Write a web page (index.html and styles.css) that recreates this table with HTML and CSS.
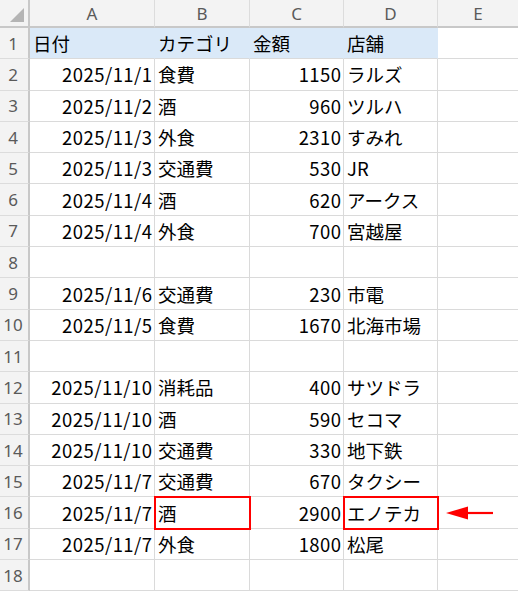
FILE: index.html
```html
<!DOCTYPE html>
<html lang="ja">
<head>
<meta charset="utf-8">
<link rel="stylesheet" href="styles.css">
</head>
<body>
<div class="sheet">
  <div class="corner"><span class="tri"></span></div>
  <div class="ch">A</div><div class="ch">B</div><div class="ch">C</div><div class="ch">D</div><div class="ch last">E</div>

  <div class="rh">1</div><div class="c hd">日付</div><div class="c hd">カテゴリ</div><div class="c hd">金額</div><div class="c hd">店舗</div><div class="c last"></div>
  <div class="rh">2</div><div class="c n">2025/11/1</div><div class="c">食費</div><div class="c n">1150</div><div class="c">ラルズ</div><div class="c last"></div>
  <div class="rh">3</div><div class="c n">2025/11/2</div><div class="c">酒</div><div class="c n">960</div><div class="c">ツルハ</div><div class="c last"></div>
  <div class="rh">4</div><div class="c n">2025/11/3</div><div class="c">外食</div><div class="c n">2310</div><div class="c">すみれ</div><div class="c last"></div>
  <div class="rh">5</div><div class="c n">2025/11/3</div><div class="c">交通費</div><div class="c n">530</div><div class="c">JR</div><div class="c last"></div>
  <div class="rh">6</div><div class="c n">2025/11/4</div><div class="c">酒</div><div class="c n">620</div><div class="c">アークス</div><div class="c last"></div>
  <div class="rh">7</div><div class="c n">2025/11/4</div><div class="c">外食</div><div class="c n">700</div><div class="c">宮越屋</div><div class="c last"></div>
  <div class="rh">8</div><div class="c"></div><div class="c"></div><div class="c"></div><div class="c"></div><div class="c last"></div>
  <div class="rh">9</div><div class="c n">2025/11/6</div><div class="c">交通費</div><div class="c n">230</div><div class="c">市電</div><div class="c last"></div>
  <div class="rh">10</div><div class="c n">2025/11/5</div><div class="c">食費</div><div class="c n">1670</div><div class="c">北海市場</div><div class="c last"></div>
  <div class="rh">11</div><div class="c"></div><div class="c"></div><div class="c"></div><div class="c"></div><div class="c last"></div>
  <div class="rh">12</div><div class="c n">2025/11/10</div><div class="c">消耗品</div><div class="c n">400</div><div class="c">サツドラ</div><div class="c last"></div>
  <div class="rh">13</div><div class="c n">2025/11/10</div><div class="c">酒</div><div class="c n">590</div><div class="c">セコマ</div><div class="c last"></div>
  <div class="rh">14</div><div class="c n">2025/11/10</div><div class="c">交通費</div><div class="c n">330</div><div class="c">地下鉄</div><div class="c last"></div>
  <div class="rh">15</div><div class="c n">2025/11/7</div><div class="c">交通費</div><div class="c n">670</div><div class="c">タクシー</div><div class="c last"></div>
  <div class="rh">16</div><div class="c n">2025/11/7</div><div class="c mark">酒</div><div class="c n">2900</div><div class="c mark">エノテカ</div><div class="c last arrowcell"><svg class="arrow" width="50" height="20" viewBox="0 0 50 20"><line x1="18" y1="10" x2="47" y2="10" stroke="#f00" stroke-width="2.2"/><polygon points="0,10 22,3.5 22,16.5" fill="#f00"/></svg></div>
  <div class="rh">17</div><div class="c n">2025/11/7</div><div class="c">外食</div><div class="c n">1800</div><div class="c">松尾</div><div class="c last"></div>
  <div class="rh">18</div><div class="c"></div><div class="c"></div><div class="c"></div><div class="c"></div><div class="c last"></div>
</div>
</body>
</html>
```
FILE: styles.css
```css
* { box-sizing: border-box; }
html, body { margin: 0; padding: 0; background: #fff; }
body { width: 518px; height: 593px; overflow: hidden; }
.sheet {
  display: grid;
  grid-template-columns: 30px 125px 95px 94px 94px 80px;
  grid-template-rows: 28px repeat(18, 31.3px);
  font-family: "Noto Sans CJK JP", "Noto Sans", sans-serif;
  font-size: 18.5px;
  color: #000;
}
.corner {
  background: #f3f3f3;
  border-right: 2px solid #c8c8c8;
  border-bottom: 2px solid #c8c8c8;
  position: relative;
}
.tri {
  position: absolute;
  right: 4px;
  bottom: 4px;
  width: 0; height: 0;
  border-left: 14px solid transparent;
  border-bottom: 14px solid #b4b4b4;
}
.ch {
  background: #f3f3f3;
  border-right: 1px solid #dcdcdc;
  border-bottom: 2px solid #c8c8c8;
  color: #5a5a5a;
  font-family: "Noto Sans", sans-serif;
  font-size: 17px;
  display: flex; align-items: center; justify-content: center;
  padding-top: 1px;
}
.ch.last { border-right: none; }
.rh {
  background: #f3f3f3;
  border-right: 2px solid #c8c8c8;
  border-bottom: 1px solid #dcdcdc;
  color: #5a5a5a;
  font-family: "Noto Sans", sans-serif;
  font-size: 17px;
  display: flex; align-items: center; justify-content: center;
  padding-right: 2px;
}
.c {
  border-right: 1px solid #dadada;
  border-bottom: 1px solid #dadada;
  display: flex; align-items: center;
  padding: 0 3px 0 3px;
  white-space: nowrap;
  position: relative;
}
.c.last { border-right: none; }
.c.n { justify-content: flex-end; padding-right: 1.5px; letter-spacing: 0.45px; }
.c.hd { background: #dae9f8; border-right-color: #dae9f8; border-bottom-color: #dadada; }
.c.mark { outline: 2px solid #f00; outline-offset: -1px; z-index: 2; }
.arrowcell { overflow: visible; }
.arrow { position: absolute; left: 8px; top: 6px; }
```
